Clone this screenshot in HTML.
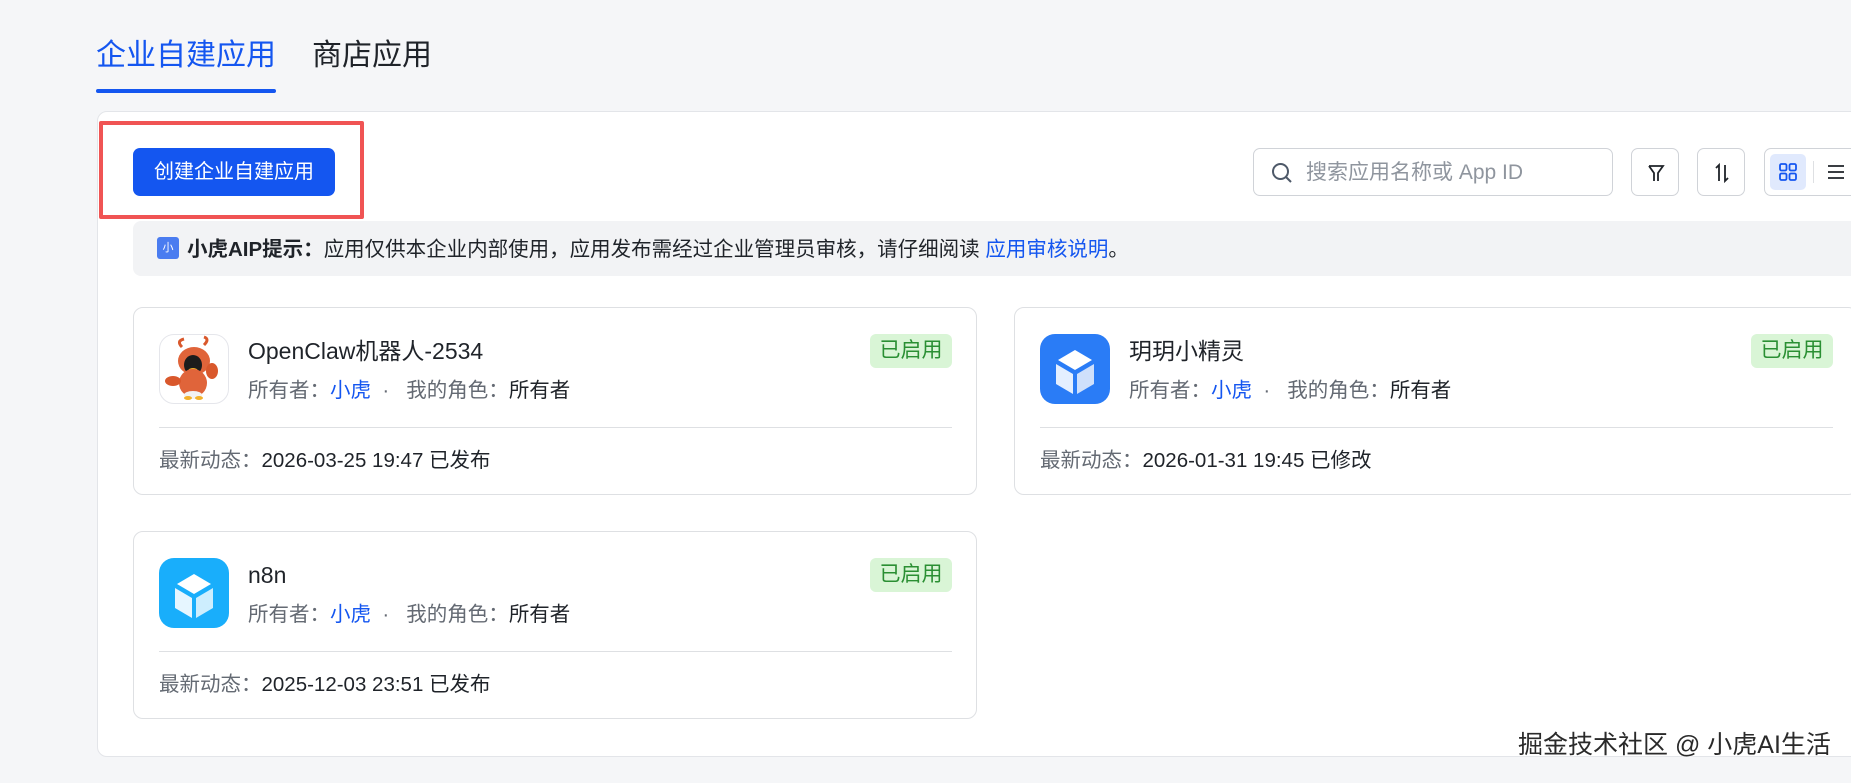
<!DOCTYPE html>
<html><head><meta charset="utf-8">
<style>
*{box-sizing:border-box;margin:0;padding:0}
body{width:1851px;height:783px;overflow:hidden;background:#f5f6f8;font-family:"Liberation Sans","Noto Sans CJK SC",sans-serif;position:relative;color:#1f2329}
.abs{position:absolute}
.tab{font-size:30px;top:37px;line-height:38px}
.panel{left:97px;top:111px;width:1800px;height:646px;background:#fff;border:1px solid #e3e5e9;border-radius:10px}
.btn{left:133px;top:148px;width:202px;height:48px;background:#1456f0;border-radius:7px;color:#fff;font-size:20px;line-height:48px;text-align:center;white-space:nowrap}
.red{left:99px;top:121px;width:265px;height:98px;border:4px solid #f05454;border-radius:2px}
.tip{left:133px;top:221px;width:1750px;height:55px;background:#f2f3f5;border-radius:8px;font-size:20.5px;line-height:57px;padding-left:24px;white-space:nowrap}
.tip .ic{display:inline-block;width:22px;height:22px;background:#4a7cf0;border-radius:3px;color:#fff;font-size:11px;line-height:22px;text-align:center;vertical-align:middle;position:relative;top:-3px;margin-right:8px}
.search{left:1253px;top:148px;width:360px;height:48px;border:1px solid #d0d3d8;border-radius:7px;font-size:21px;color:#8f959e;line-height:48px;padding-left:52px;white-space:nowrap}
.ib{top:148px;width:48px;height:48px;border:1px solid #d0d3d8;border-radius:7px}
.card{width:844px;height:188px;background:#fff;border:1px solid #dee0e3;border-radius:10px}
.card .icon{position:absolute;left:25px;top:26px;width:70px;height:70px;border-radius:15px;overflow:hidden}
.card .t{position:absolute;left:114px;top:28px;font-size:23px;line-height:30px;color:#1f2329;white-space:nowrap}
.card .m{position:absolute;left:114px;top:70px;font-size:20.5px;line-height:26px;color:#646a73;white-space:nowrap}
.m b{font-weight:normal;color:#1f2329}.m a{color:#1456f0;text-decoration:none}
.card .bd{position:absolute;right:24px;top:26px;width:82px;height:34px;background:#d9f5d6;border-radius:6px;color:#2a8f33;font-size:21px;line-height:34px;text-align:center}
.card .hr{position:absolute;left:25px;right:24px;top:119px;border-top:1px solid #dee0e3}
.card .f{position:absolute;left:25px;top:140px;font-size:20.5px;line-height:26px;color:#646a73;white-space:nowrap}
.f b{font-weight:normal;color:#1f2329}
</style></head><body>
<div class="abs tab" style="left:96px;color:#1456f0">企业自建应用</div>
<div class="abs" style="left:96px;top:89px;width:180px;height:4px;background:#1456f0;border-radius:2px"></div>
<div class="abs tab" style="left:312px">商店应用</div>

<div class="abs panel"></div>
<div class="abs btn">创建企业自建应用</div>
<div class="abs red"></div>

<div class="abs search">搜索应用名称或 App ID
<svg class="abs" style="left:16px;top:12px" width="24" height="24" viewBox="0 0 24 24" fill="none" stroke="#4e5969" stroke-width="2"><circle cx="10.5" cy="10.5" r="7.5"/><path d="M16 16l5 5"/></svg></div>
<div class="abs ib" style="left:1631px"><svg style="margin:13px" width="22" height="22" viewBox="0 0 22 22" fill="none" stroke="#1f2329" stroke-width="1.8"><path d="M4 4h14l-5 7v8M9 19v-8L4 4"/></svg></div>
<div class="abs ib" style="left:1697px"><svg style="margin:13px" width="22" height="22" viewBox="0 0 22 22" fill="none" stroke="#1f2329" stroke-width="1.8"><path d="M8 19V3L5 6M14 3v16l3-3"/></svg></div>
<div class="abs ib" style="left:1764px;width:120px"><div class="abs" style="left:5px;top:5px;width:36px;height:36px;background:#e0e9fd;border-radius:5px"></div>
<svg class="abs" style="left:12px;top:12px" width="22" height="22" viewBox="0 0 22 22" fill="none" stroke="#1456f0" stroke-width="1.8"><rect x="3" y="3" width="6.5" height="6.5" rx="1.5"/><rect x="12.5" y="3" width="6.5" height="6.5" rx="1.5"/><rect x="3" y="12.5" width="6.5" height="6.5" rx="1.5"/><rect x="12.5" y="12.5" width="6.5" height="6.5" rx="1.5"/></svg>
<div class="abs" style="left:48px;top:12px;width:1px;height:22px;background:#dee0e3"></div>
<svg class="abs" style="left:60px;top:12px" width="22" height="22" viewBox="0 0 22 22" fill="none" stroke="#1f2329" stroke-width="1.8"><path d="M3 5h16M3 11h16M3 17h16"/></svg></div>

<div class="abs tip"><span class="ic">小</span><b>小虎AIP提示：</b>应用仅供本企业内部使用，应用发布需经过企业管理员审核，请仔细阅读 <span style="color:#1456f0">应用审核说明</span>。</div>

<div class="abs card" style="left:133px;top:307px">
 <div class="icon" style="border:1px solid #e5e6eb;background:#fff">
  <svg width="70" height="70" viewBox="0 0 70 70"><path d="M22 12q-6-6 2-8M44 10q6-6 0-8" stroke="#d9582c" stroke-width="3" fill="none"/><ellipse cx="34" cy="26" rx="16" ry="14" fill="#e0643a"/><ellipse cx="33" cy="30" rx="9" ry="10" fill="#1c1c1c"/><ellipse cx="33" cy="36" rx="5" ry="3" fill="#f3b22b"/><ellipse cx="33" cy="48" rx="14" ry="14" fill="#e0643a"/><ellipse cx="52" cy="36" rx="6" ry="8" fill="#d9582c"/><ellipse cx="13" cy="46" rx="8" ry="5" fill="#d9582c"/><ellipse cx="33" cy="60" rx="9" ry="4" fill="#f2f2f2"/><ellipse cx="28" cy="63" rx="4" ry="2" fill="#f3b22b"/><ellipse cx="39" cy="63" rx="4" ry="2" fill="#f3b22b"/></svg>
 </div>
 <div class="t">OpenClaw机器人-2534</div>
 <div class="m">所有者：<a>小虎</a> &nbsp;· &nbsp; 我的角色：<b>所有者</b></div>
 <div class="bd">已启用</div><div class="hr"></div>
 <div class="f">最新动态：<b>2026-03-25 19:47 已发布</b></div>
</div>

<div class="abs card" style="left:1014px;top:307px">
 <div class="icon" style="background:#2a7cf6"><svg width="70" height="70" viewBox="0 0 70 70"><path d="M35 16l17 10-17 10-17-10z" fill="#fff"/><path d="M16 30l17 10v20l-17-10z" fill="#e4efff"/><path d="M54 30l-17 10v20l17-10z" fill="#cfe0fb"/></svg></div>
 <div class="t">玥玥小精灵</div>
 <div class="m">所有者：<a>小虎</a> &nbsp;· &nbsp; 我的角色：<b>所有者</b></div>
 <div class="bd">已启用</div><div class="hr"></div>
 <div class="f">最新动态：<b>2026-01-31 19:45 已修改</b></div>
</div>

<div class="abs card" style="left:133px;top:531px">
 <div class="icon" style="background:#19aefb"><svg width="70" height="70" viewBox="0 0 70 70"><path d="M35 16l17 10-17 10-17-10z" fill="#fff"/><path d="M16 30l17 10v20l-17-10z" fill="#e6f6ff"/><path d="M54 30l-17 10v20l17-10z" fill="#cdeefe"/></svg></div>
 <div class="t">n8n</div>
 <div class="m">所有者：<a>小虎</a> &nbsp;· &nbsp; 我的角色：<b>所有者</b></div>
 <div class="bd">已启用</div><div class="hr"></div>
 <div class="f">最新动态：<b>2025-12-03 23:51 已发布</b></div>
</div>

<div class="abs" style="left:1518px;top:730px;font-size:25px;line-height:30px;color:#2a2a2a;white-space:nowrap;text-shadow:0 0 2px #fff,0 0 3px #fff">掘金技术社区 @ 小虎AI生活</div>
</body></html>
